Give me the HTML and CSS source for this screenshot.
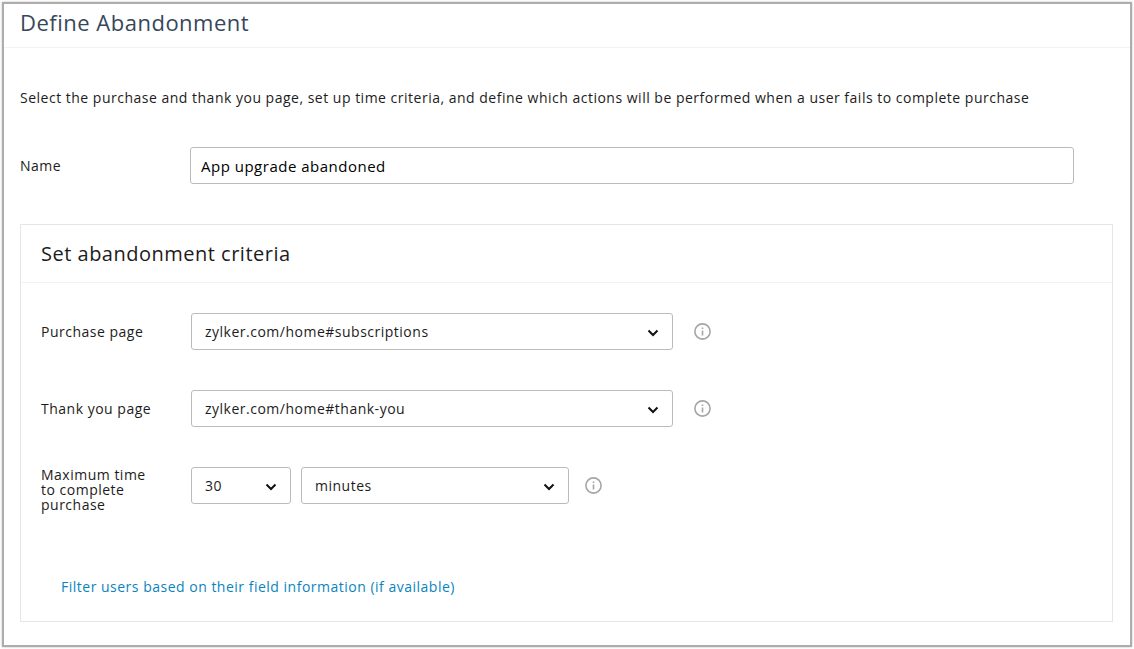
FILE: index.html
```html
<!DOCTYPE html>
<html lang="en">
<head>
<meta charset="utf-8">
<title>Define Abandonment</title>
<link rel="stylesheet" href="styles.css">
</head>
<body>
<main class="window">
  <h1 class="title">Define Abandonment</h1>
  <form class="content">
    <p class="intro">Select the purchase and thank you page, set up time criteria, and define which actions will be performed when a user fails to complete purchase</p>
    <div class="name-row">
      <label class="label" for="name">Name</label>
      <input class="name-input" id="name" type="text" value="App upgrade abandoned">
    </div>
    <section class="panel">
      <h2 class="panel-title">Set abandonment criteria</h2>
      <div class="criteria">
        <div class="row">
          <label class="label" for="purchase">Purchase page</label>
          <select class="select page-select" id="purchase"><option>zylker.com/home#subscriptions</option></select>
          <svg class="info" viewBox="0 0 17 17" role="img" aria-label="Info"><circle cx="8.500" cy="8.500" r="7.600"/><path d="M8.500 7.500v5M8.500 4.500v1.600"/></svg>
        </div>
        <div class="row">
          <label class="label" for="thanks">Thank you page</label>
          <select class="select page-select" id="thanks"><option>zylker.com/home#thank-you</option></select>
          <svg class="info" viewBox="0 0 17 17" role="img" aria-label="Info"><circle cx="8.500" cy="8.500" r="7.600"/><path d="M8.500 7.500v5M8.500 4.500v1.600"/></svg>
        </div>
        <div class="row time-row">
          <label class="label" for="amount">Maximum time to complete purchase</label>
          <select class="select amount-select" id="amount"><option>30</option></select>
          <select class="select unit-select" aria-label="Time unit"><option>minutes</option></select>
          <svg class="info" viewBox="0 0 17 17" role="img" aria-label="Info"><circle cx="8.500" cy="8.500" r="7.600"/><path d="M8.500 7.500v5M8.500 4.500v1.600"/></svg>
        </div>
      </div>
      <a class="filter" href="#">Filter users based on their field information (if available)</a>
    </section>
  </form>
</main>
</body>
</html>
```
FILE: styles.css
```css
* { box-sizing: border-box; }
body {
  margin: 0;
  padding: 2px 2px 3px;
  background: #fff;
  color: #1c1c1c;
  font: 14px/20px "Open Sans", "Noto Sans", sans-serif;
  letter-spacing: 0.5px;
}
.window {
  border: 2px solid #adadad;
  box-shadow: 0 0 2px #bbb;
  min-height: calc(100vh - 5px);
}
.title {
  margin: 0;
  padding: 4px 16px 11px;
  border-bottom: 1px solid #f3f3f3;
  color: #36475b;
  font-size: 22px;
  line-height: 28px;
  font-weight: 400;
}
.content { padding: 40px 17px 23px 16px; }
.intro { margin: 0 0 39px; }
.name-row, .row { display: flex; align-items: center; }
.name-row { margin-right: 39px; }
.label { flex: none; width: 150px; }
.name-row .label { width: 170px; }
.name-input {
  flex: 1;
  height: 37px;
  padding: 0 10px;
  border: 1px solid #bbb;
  border-radius: 3px;
  font: inherit;
  font-size: 15px;
  letter-spacing: inherit;
  color: #000;
}
.panel { margin-top: 40px; border: 1px solid #e6e6e6; padding-bottom: 24px; }
.panel-title {
  margin: 0;
  padding: 15px 20px 14px;
  border-bottom: 1px solid #f0f3f4;
  font-size: 20px;
  line-height: 28px;
  font-weight: 400;
}
.criteria { display: grid; gap: 40px; padding: 30px 20px 0; }
.row { height: 37px; }
.select {
  appearance: none;
  height: 37px;
  padding: 0 13px;
  border: 1px solid #bbb;
  border-radius: 3px;
  background: #fff url("data:image/svg+xml,%3Csvg xmlns='http://www.w3.org/2000/svg' width='12' height='8'%3E%3Cpath d='M1.500 1.500L6 6l4.500-4.500' fill='none' stroke='%23111' stroke-width='2'/%3E%3C/svg%3E") no-repeat right 13px top 15px;
  color: inherit;
  font: inherit;
  letter-spacing: inherit;
}
.page-select { width: 482px; }
.amount-select { width: 100px; margin-right: 10px; }
.unit-select { width: 268px; }
.info { width: 17px; height: 17px; margin-left: 21px; fill: none; stroke: #a6a6a6; stroke-width: 1.6; }
.time-row .label { line-height: 15px; padding: 8px 40px 0 0; }
.time-row .info { margin-left: 16px; }
.filter { display: block; margin: 73px 40px 0; color: #0a84bd; text-decoration: none; }
```
